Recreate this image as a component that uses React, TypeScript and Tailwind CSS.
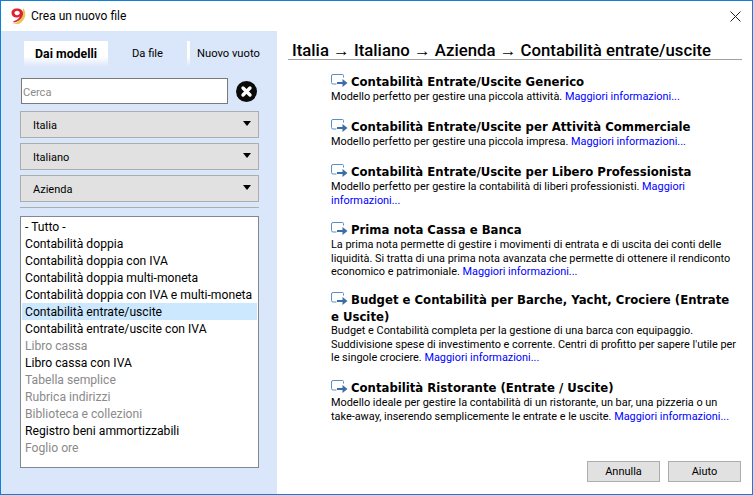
import { Fragment } from 'react'

const categories = [
  { label: '- Tutto -' },
  { label: 'Contabilità doppia' },
  { label: 'Contabilità doppia con IVA' },
  { label: 'Contabilità doppia multi-moneta' },
  { label: 'Contabilità doppia con IVA e multi-moneta' },
  { label: 'Contabilità entrate/uscite', selected: true },
  { label: 'Contabilità entrate/uscite con IVA' },
  { label: 'Libro cassa', muted: true },
  { label: 'Libro cassa con IVA' },
  { label: 'Tabella semplice', muted: true },
  { label: 'Rubrica indirizzi', muted: true },
  { label: 'Biblioteca e collezioni', muted: true },
  { label: 'Registro beni ammortizzabili' },
  { label: 'Foglio ore', muted: true },
]

const templates = [
  {
    title: ['Contabilità Entrate/Uscite Generico'],
    text: ['Modello perfetto per gestire una piccola attività. '],
    tail: 'Maggiori informazioni...',
    gap: 'mb-[15.5px]',
  },
  {
    title: ['Contabilità Entrate/Uscite per Attività Commerciale'],
    text: ['Modello perfetto per gestire una piccola impresa. '],
    tail: 'Maggiori informazioni...',
    gap: 'mb-[15.5px]',
  },
  {
    title: ['Contabilità Entrate/Uscite per Libero Professionista'],
    text: ['Modello perfetto per gestire la contabilità di liberi professionisti. '],
    link: 'Maggiori',
    tail: 'informazioni...',
    gap: 'mb-[15px]',
  },
  {
    title: ['Prima nota Cassa e Banca'],
    text: [
      'La prima nota permette di gestire i movimenti di entrata e di uscita dei conti delle',
      'liquidità. Si tratta di una prima nota avanzata che permette di ottenere il rendiconto',
      'economico e patrimoniale. ',
    ],
    tail: 'Maggiori informazioni...',
    gap: 'mb-[13.5px]',
  },
  {
    title: ['Budget e Contabilità per Barche, Yacht, Crociere (Entrate', 'e Uscite)'],
    text: [
      'Budget e Contabilità completa per la gestione di una barca con equipaggio.',
      "Suddivisione spese di investimento e corrente. Centri di profitto per sapere l'utile per",
      'le singole crociere. ',
    ],
    tail: 'Maggiori informazioni...',
    gap: 'mb-[15.5px]',
  },
  {
    title: ['Contabilità Ristorante (Entrate / Uscite)'],
    text: [
      'Modello ideale per gestire la contabilità di un ristorante, un bar, una pizzeria o un',
      'take-away, inserendo semplicemente le entrate e le uscite. ',
    ],
    tail: 'Maggiori informazioni...',
    gap: '',
  },
]

function AppLogo() {
  return (
    <svg width="17" height="18" viewBox="0 0 17 18" className="shrink-0">
      <path d="M13 1 C17 5 16 13 9 17 L2 17 C8 16 13 12 13 1 Z" fill="#e8c65a" />
      <path
        d="M7 1.5 C3.5 1.5 1.5 3.5 1.5 6 C1.5 8.5 3.5 10.5 6.5 10.5 C8 10.5 9 10 9.8 9.2 C9 11.5 6.5 13.5 3 14.5 L4 15.5 C9.5 14.5 13 10.5 13 6 C13 3.5 10.5 1.5 7 1.5 Z M7 3.8 C8.7 3.8 9.8 4.8 9.8 6 C9.8 7.2 8.7 8.2 7 8.2 C5.5 8.2 4.5 7.2 4.5 6 C4.5 4.8 5.5 3.8 7 3.8 Z"
        fill="#e0202f"
      />
    </svg>
  )
}

function ClearIcon() {
  return (
    <svg width="21" height="21" viewBox="0 0 21 21" className="shrink-0">
      <circle cx="10.5" cy="10.5" r="10.5" fill="#0a0a0a" />
      <path d="M7 7 L14 14 M14 7 L7 14" stroke="#ffffff" strokeWidth="3.4" strokeLinecap="round" />
    </svg>
  )
}

function TemplateIcon() {
  return (
    <svg width="17" height="13" viewBox="0 0 17 13" fill="none" className="shrink-0">
      <path d="M12.5 3.5 V1.5 A1 1 0 0 0 11.5 0.5 H2 A1.5 1.5 0 0 0 0.5 2 V8.5 A1.5 1.5 0 0 0 2 10 H5.5" stroke="#5b8fc4" />
      <path d="M6 9 H13" stroke="#3b6ea5" strokeWidth="2" />
      <path d="M11.5 5 L16.5 9 L11.5 13 Z" fill="#3b6ea5" />
    </svg>
  )
}

function Select({ label }: { label: string }) {
  return (
    <div className="h-[27px] w-[239px] border border-[#adadad] bg-[#e1e1e1] pl-3 pr-[6px] flex items-center justify-between">
      <span className="text-[11px] pt-[4px]">{label}</span>
      <span className="w-0 h-0 mb-[2px] mr-[1px] border-x-[4px] border-x-transparent border-t-[5px] border-t-black" />
    </div>
  )
}

export default function App() {
  return (
    <div className="w-[753px] h-[495px] border border-[#0f7fd8] bg-white text-black flex flex-col overflow-hidden font-['Roboto',sans-serif]">
      <div className="h-[30px] shrink-0 flex items-center pl-[9px] pr-[11px]">
        <AppLogo />
        <span className="ml-[4px] text-[12px]">Crea un nuovo file</span>
        <svg width="11" height="11" viewBox="0 0 11 11" className="ml-auto">
          <path d="M0.5 0.5 L10.5 10.5 M10.5 0.5 L0.5 10.5" stroke="#222" />
        </svg>
      </div>

      <div className="flex flex-1 min-h-0">
        <aside className="w-[276px] shrink-0 bg-[#dae6f9] pt-[10px] pl-[19px]">
          <div className="h-[26px] pl-[4px] flex text-[11.2px]">
            <div className="w-[84px] bg-gradient-to-b from-white from-60% to-[#dae6f9] pt-[1px] text-[12.3px] font-bold flex items-center justify-center">
              Dai modelli
            </div>
            <div className="w-[79px] flex items-center justify-center pt-[1px]">Da file</div>
            <div className="w-[3px] bg-gradient-to-b from-white from-60% to-[#dae6f9]" />
            <div className="flex items-center pl-[7px] pt-[1px] whitespace-nowrap">Nuovo vuoto</div>
          </div>

          <div className="mt-[11px] pl-[1px] flex items-center gap-[8px]">
            <div className="w-[207px] h-[26px] border border-[#7a7a7a] bg-white pl-[1px] pt-[4px] flex items-center text-[11px] text-[#8a8a8a]">
              Cerca
            </div>
            <ClearIcon />
          </div>

          <div className="mt-[7px] flex flex-col gap-[5px]">
            <Select label="Italia" />
            <Select label="Italiano" />
            <Select label="Azienda" />
          </div>

          <div className="mt-[5px] w-[239px] h-[1px] bg-[#adadad]" />

          <div className="mt-[8px] w-[239px] h-[252px] border border-[#828790] bg-white p-[1px] text-[12.15px]">
            {categories.map((c) => (
              <div
                key={c.label}
                className={`h-[17px] pl-[3px] pt-[2px] flex items-center whitespace-nowrap ${c.selected ? 'bg-[#cce8ff]' : ''} ${c.muted ? 'text-[#8a8a8a]' : ''}`}
              >
                {c.label}
              </div>
            ))}
          </div>
        </aside>

        <main className="flex-1 min-w-0 pl-[11px] pr-[10px] flex flex-col">
          <div className="h-[29px] pl-[4px] border-b border-[#a0a0a0] flex items-end text-[16.75px] leading-[18px] font-medium whitespace-nowrap">
            Italia → Italiano → Azienda → Contabilità entrate/uscite
          </div>

          <div className="pl-[43px] pt-[14px]">
            {templates.map((t) => (
              <div key={t.title[0]} className={t.gap}>
                <div className="text-[11.7px] leading-[15px] font-bold font-['DejaVu_Sans',sans-serif] whitespace-nowrap">
                  <span className="inline-flex align-[-1px] mr-[3px]">
                    <TemplateIcon />
                  </span>
                  {t.title[0]}
                  {t.title[1] && <div className="mt-[2px]">{t.title[1]}</div>}
                </div>
                <div className={`text-[10.9px] leading-[13.5px] whitespace-nowrap ${t.title[1] ? '-mt-[1px]' : ''}`}>
                  {t.text.map((line, i) => (
                    <Fragment key={line}>
                      {i > 0 && <br />}
                      {line}
                    </Fragment>
                  ))}
                  {t.link && <span className="text-[#0000ff]">{t.link}</span>}
                  {t.link && <br />}
                  <span className="text-[#0000ff]">{t.tail}</span>
                </div>
              </div>
            ))}
          </div>

          <div className="mt-auto mb-[12px] mr-[1px] flex justify-end gap-[8px]">
            <button className="w-[73px] h-[21px] border border-[#adadad] bg-[#e1e1e1] pt-[1px] text-[11px]">Annulla</button>
            <button className="w-[73px] h-[21px] border border-[#adadad] bg-[#e1e1e1] pt-[1px] text-[11px]">Aiuto</button>
          </div>
        </main>
      </div>
    </div>
  )
}
